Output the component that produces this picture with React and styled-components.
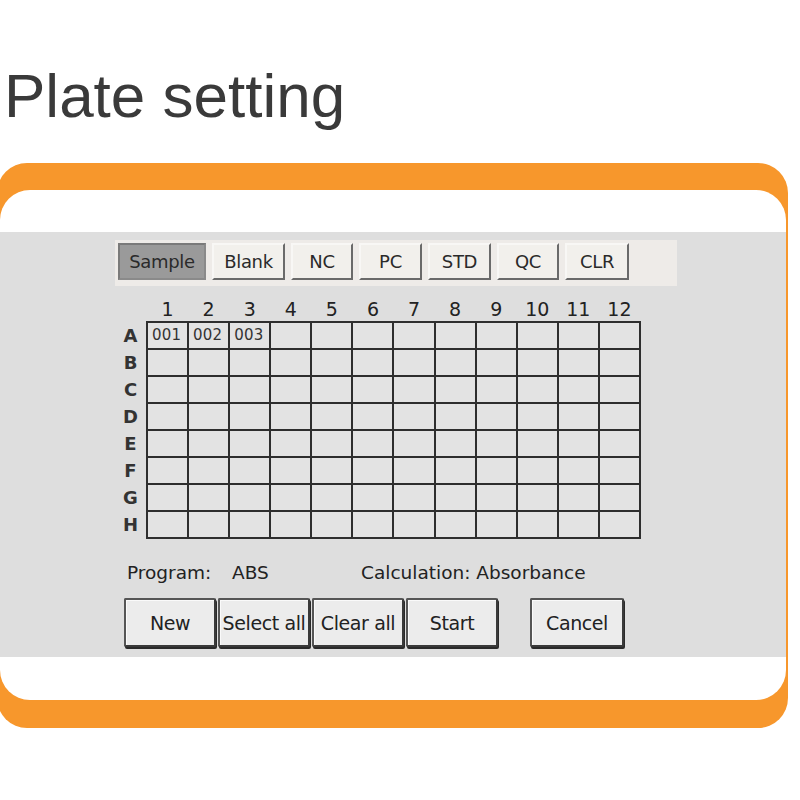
import React from 'react';
import styled, { createGlobalStyle } from 'styled-components';

const GlobalStyle = createGlobalStyle`
  body {
    margin: 0;
    background: #fff;
    overflow: hidden;
  }
`;

const Page = styled.div`
  width: 800px;
  height: 800px;
  background: #fff;
`;

const Title = styled.h1`
  margin: 0;
  padding: 60px 0 0 4px;
  height: 72px;
  line-height: 72px;
  font-family: "Liberation Sans", Arial, sans-serif;
  font-weight: normal;
  font-size: 62px;
  color: #3a3a3a;
`;

const Frame = styled.div`
  margin: 31px 0 0 -3px;
  width: 791px;
  box-sizing: border-box;
  padding: 27px 2px 28px 3px;
  background: #f7972c;
  border-radius: 30px;
`;

const Inner = styled.div`
  background: #fff;
  border-radius: 30px;
  padding: 42px 0 43px;
`;

const Panel = styled.div`
  background: #dedede;
  padding: 8px 0 10px 115px;
  font-family: "DejaVu Sans", Tahoma, sans-serif;
  color: #222;
`;

const Toolbar = styled.div`
  width: 562px;
  height: 46px;
  box-sizing: border-box;
  padding: 3px 0 0 3px;
  background: #eeebe8;
  display: flex;
  gap: 6px;
`;

const Tab = styled.div`
  width: ${p => p.w}px;
  height: 37px;
  box-sizing: border-box;
  display: flex;
  align-items: center;
  justify-content: center;
  font-size: 18px;
  letter-spacing: -0.3px;
  background: ${p => (p.active ? '#9a9a9a' : '#f2f0ec')};
  border-top: 2px solid ${p => (p.active ? '#7a7a7a' : '#f8f7f5')};
  border-left: 2px solid ${p => (p.active ? '#7a7a7a' : '#f8f7f5')};
  border-right: 2px solid ${p => (p.active ? '#8a8a8a' : '#6a6a6a')};
  border-bottom: 2px solid ${p => (p.active ? '#8a8a8a' : '#6a6a6a')};
  color: #2a2a2a;
`;

const Plate = styled.div`
  margin: 13px 0 0 5px;
  width: 521px;
`;

const Header = styled.div`
  display: grid;
  grid-template-columns: 26px repeat(12, 1fr);
  height: 22px;
  padding-right: 2px;
`;

const ColNum = styled.div`
  text-align: center;
  font-size: 19px;
  line-height: 20px;
  padding-left: 2px;
`;

const Body = styled.div`
  display: flex;
`;

const RowLabels = styled.div`
  width: 26px;
  display: grid;
  grid-template-rows: repeat(8, 1fr);
  padding: 2px 0;
  row-gap: 2px;
`;

const RowLabel = styled.div`
  font-size: 18px;
  font-weight: bold;
  color: #333;
  display: flex;
  align-items: center;
  justify-content: center;
  padding-right: 5px;
`;

const Grid = styled.div`
  width: 495px;
  height: 218px;
  box-sizing: border-box;
  padding: 2px;
  gap: 2px;
  background: #2e2e2e;
  display: grid;
  grid-template-columns: repeat(12, 1fr);
  grid-template-rows: repeat(8, 1fr);
`;

const Cell = styled.div`
  background: #e3e3e3;
  font-size: 15px;
  letter-spacing: 0.2px;
  color: #333;
  display: flex;
  align-items: center;
  padding: 0 0 2px 4px;
`;

const Info = styled.div`
  margin: 21px 0 0 12px;
  height: 24px;
  display: grid;
  grid-template-columns: 105px 129px auto;
  align-items: center;
  font-size: 18.5px;
`;

const Buttons = styled.div`
  margin: 14px 0 0 9px;
  display: flex;
  gap: 2px;
`;

const Button = styled.button`
  width: ${p => (p.sep ? 94 : 92)}px;
  height: 49px;
  margin-left: ${p => (p.sep ? 30 : 0)}px;
  box-sizing: border-box;
  background: #ececec;
  border: 2px solid #3a3a3a;
  border-top-color: #555;
  border-left-color: #555;
  border-radius: 2px;
  box-shadow: inset 1px 1px 0 #fafafa, 1px 2px 0 #2a2a2a;
  font-family: "DejaVu Sans", Tahoma, sans-serif;
  font-size: 19px;
  letter-spacing: -0.4px;
  color: #222;
  padding: 0;
  white-space: nowrap;
`;

const tabs = [
  ['Sample', 88, true],
  ['Blank', 73],
  ['NC', 62],
  ['PC', 63],
  ['STD', 63],
  ['QC', 62],
  ['CLR', 64],
];

const rows = ['A', 'B', 'C', 'D', 'E', 'F', 'G', 'H'];
const cols = Array.from({ length: 12 }, (_, i) => i + 1);

const App = () => {
  return (
    <Page>
      <GlobalStyle />
      <Title>Plate setting</Title>
      <Frame>
        <Inner>
          <Panel>
            <Toolbar>
              {tabs.map(([label, w, active]) => (
                <Tab key={label} w={w} active={active}>{label}</Tab>
              ))}
            </Toolbar>
            <Plate>
              <Header>
                <div />
                {cols.map(c => <ColNum key={c}>{c}</ColNum>)}
              </Header>
              <Body>
                <RowLabels>
                  {rows.map(r => <RowLabel key={r}>{r}</RowLabel>)}
                </RowLabels>
                <Grid>
                  {rows.map((r, ri) =>
                    cols.map(c => (
                      <Cell key={r + c}>
                        {ri === 0 && c <= 3 ? '00' + c : ''}
                      </Cell>
                    ))
                  )}
                </Grid>
              </Body>
            </Plate>
            <Info>
              <span>Program:</span>
              <span>ABS</span>
              <span>Calculation: Absorbance</span>
            </Info>
            <Buttons>
              <Button>New</Button>
              <Button>Select all</Button>
              <Button>Clear all</Button>
              <Button>Start</Button>
              <Button sep>Cancel</Button>
            </Buttons>
          </Panel>
        </Inner>
      </Frame>
    </Page>
  );
};

export default App;
